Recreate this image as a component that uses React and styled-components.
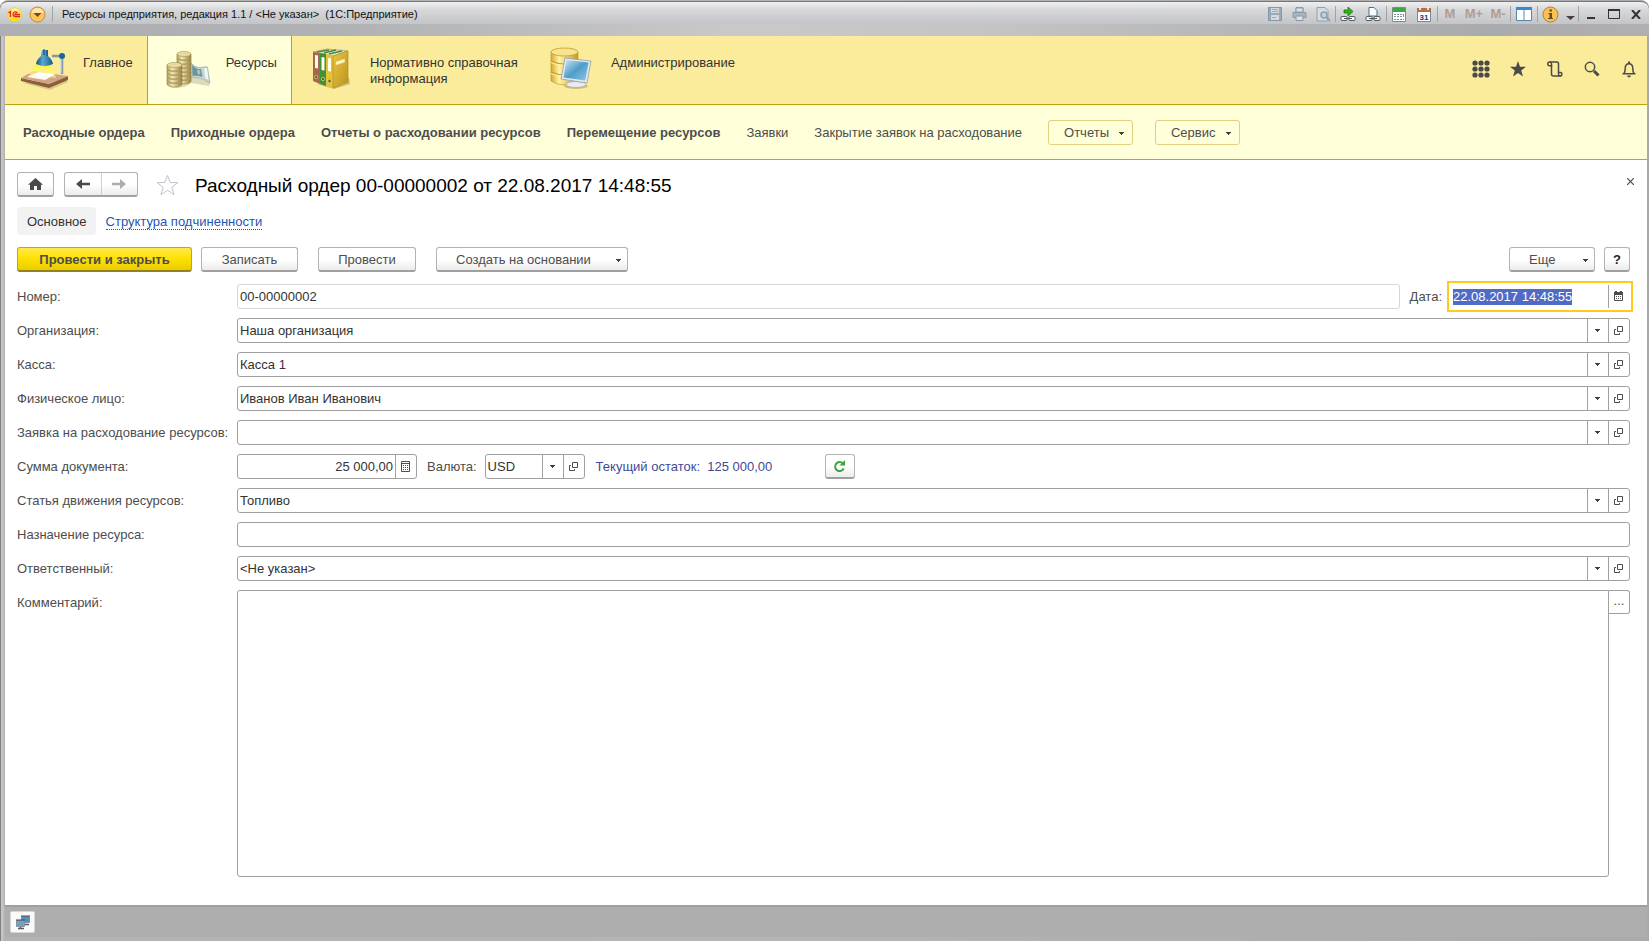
import React, { useEffect, useRef } from "react";
import styled, { createGlobalStyle, css } from "styled-components";

const GlobalStyle = createGlobalStyle`
  *, *::before, *::after { box-sizing: border-box; }
  body {
    margin: 0;
    background: #ffffff;
    color: #4d4d4d;
    font: 13px/16px "Liberation Sans", Arial, sans-serif;
  }
  button, input, textarea { font: inherit; color: inherit; }
  h1 { margin: 0; }
  svg { display: block; flex: none; }
`;

/* ---------- window frame ---------- */

const Window = styled.div`
  display: flex;
  flex-direction: column;
  min-height: 100vh;
  padding: 1px 2px 4px 5px;
  border-radius: 8px 8px 0 0;
  background: linear-gradient(90deg, #808080 0, #808080 1px, #c6c4c4 1px, #c6c4c4 3px, #b4b2b2 4px, #b4b4b6 50%, #a9aaad 100%);
`;

const TitleBar = styled.header`
  display: flex;
  align-items: center;
  height: 35px;
  margin: 0 -2px 0 -5px;
  padding: 0 2px 10px 7px;
  border-top: 1px solid #777777;
  border-radius: 8px 8px 0 0;
  background:
    linear-gradient(180deg, #f0f0f0 0, #d6d7d9 8px, #c4c5c8 22px, transparent 22px),
    linear-gradient(90deg, #aeafb2 0, #b0b1b4 20%, #c9c9c9 45%, #c4c4c4 60%, #a9aaad 90%, #b0b0b2 100%);
  color: #111111;
`;

const AppTitle = styled.div`
  flex: 1;
  margin-left: 9px;
  font-size: 11px;
  white-space: pre;
`;

const Separator = styled.span`
  width: 1px;
  height: 16px;
  background: #a3a3a6;
`;

const TitleButton = styled.button`
  display: grid;
  place-items: center;
  width: ${(p) => p.$w || 24}px;
  height: 20px;
  padding: 0;
  border: 0;
  background: none;
  color: #b09c94;
  font-weight: bold;
`;

/* ---------- sections ---------- */

const Sections = styled.nav`
  display: flex;
  min-height: 69px;
  border-bottom: 1px solid #bfa20e;
  background: #fbec9c;
`;

const SectionTab = styled.a`
  display: flex;
  gap: 15px;
  padding: 10px 14px 10px 15px;
  border-right: 1px solid ${(p) => (p.$line ? "#bfa20e" : "transparent")};
  background: ${(p) => (p.$active ? "#ffffd9" : "transparent")};
  color: #333333;
  text-decoration: none;
`;

const SectionName = styled.span`
  max-width: 148px;
  padding-top: 9px;
`;

const Tools = styled.div`
  display: flex;
  align-items: center;
  gap: 13px;
  margin-left: auto;
  padding: 0 6px 2px 0;
`;

const ToolButton = styled.button`
  display: grid;
  place-items: center;
  width: 24px;
  height: 24px;
  padding: 0;
  border: 0;
  background: none;
  color: #4a4a4a;
`;

/* ---------- commands of the section ---------- */

const Commands = styled.nav`
  display: flex;
  align-items: center;
  gap: 26px;
  min-height: 55px;
  padding: 0 18px;
  border-bottom: 1px solid #a0a08c;
  background: #ffffd9;
`;

const CommandLink = styled.a`
  padding-top: 2px;
  color: #4d4d4d;
  font-weight: ${(p) => (p.$strong ? "bold" : "normal")};
  text-decoration: none;
  white-space: nowrap;
`;

const CommandMenus = styled.div`
  display: flex;
  gap: 22px;
`;

const CommandMenu = styled.button`
  display: flex;
  align-items: center;
  gap: 10px;
  height: 25px;
  padding: 2px 8px 0 15px;
  border: 1px solid #e3cf7f;
  border-radius: 3px;
  background: transparent;
`;

/* ---------- document form ---------- */

const Document = styled.main`
  display: flex;
  flex: 1;
  flex-direction: column;
  padding: 12px 17px 28px 12px;
  background: #ffffff;
`;

const Heading = styled.div`
  display: flex;
  align-items: center;
  height: 25px;
`;

const Title = styled.h1`
  flex: 1;
  margin-left: 16px;
  padding-top: 2px;
  color: #000000;
  font-size: 19px;
  font-weight: normal;
  line-height: 24px;
`;

const raised = css`
  border: 1px solid #b3b3b3;
  border-bottom: 2px solid #a0a0a0;
  border-radius: 3px;
  background: linear-gradient(180deg, #ffffff 50%, #ececec);
`;

const Button = styled.button`
  ${raised}
  display: flex;
  align-items: center;
  justify-content: ${(p) => (p.$menu ? "space-between" : "center")};
  min-width: ${(p) => p.$w}px;
  height: 25px;
  padding: ${(p) => (p.$icon ? "0" : p.$menu ? "2px 6px 0 19px" : "2px 0 0")};
  color: ${(p) => (p.$dark ? "#222222" : "#4d4d4d")};
  font-weight: ${(p) => (p.$dark ? "bold" : "normal")};
  ${(p) =>
    p.$primary &&
    css`
      border-color: #c8a800 #c8a800 #94821e;
      background: linear-gradient(180deg, #ffe94a, #ffe000 50%, #eacb00);
      font-weight: bold;
    `}
`;

const History = styled.div`
  ${raised}
  display: flex;
  width: 74px;
  height: 25px;
  margin: 0 18px 0 10px;
`;

const HistoryButton = styled.button`
  display: grid;
  flex: 1;
  place-items: center;
  padding: 0;
  border: 0;
  background: none;
  color: ${(p) => (p.disabled ? "#adadad" : "#4a4a4a")};
  & + & { border-left: 1px solid #d0d0d0; }
`;

const IconButton = styled.button`
  display: grid;
  place-items: center;
  padding: 0;
  border: 0;
  background: none;
  color: #4d4d4d;
`;

const CloseButton = styled(IconButton)`
  align-self: flex-start;
  width: 18px;
  height: 18px;
  margin-right: -9px;
`;

const Pages = styled.nav`
  display: flex;
  align-items: center;
  gap: 10px;
  margin-top: 10px;
`;

const CurrentPage = styled.span`
  padding: 7px 9px 5px 10px;
  border-radius: 4px;
  background: #f2f2f2;
  color: #333333;
`;

const PageLink = styled.a`
  padding-top: 2px;
  border-bottom: 1px dotted #1f55b5;
  color: #1f55b5;
  line-height: 14px;
  text-decoration: none;
`;

const Actions = styled.div`
  display: flex;
  margin: 12px 0;
`;

const ActionGroup = styled.div`
  display: flex;
  gap: ${(p) => p.$gap}px;
  margin-left: ${(p) => (p.$end ? "auto" : "9px")};
`;

const Form = styled.form`
  display: flex;
  flex: 1;
  flex-direction: column;
  gap: 9px;
`;

const Row = styled.div`
  display: flex;
  flex: ${(p) => (p.$fill ? "1" : "none")};
  align-items: flex-start;
`;

const Label = styled.label`
  flex: none;
  width: ${(p) => (p.$inline ? "auto" : "220px")};
  height: 25px;
  margin: ${(p) => (p.$inline ? "0 8px 0 10px" : "0")};
  line-height: 26px;
`;

const Field = styled.div`
  display: flex;
  flex: ${(p) => (p.$w ? "none" : "1")};
  width: ${(p) => (p.$w ? `${p.$w}px` : "auto")};
  min-width: 0;
  height: 25px;
  border: 1px solid ${(p) => (p.$focus ? "transparent" : p.$readOnly ? "#d6d6d6" : "#a0a0a0")};
  border-radius: ${(p) => (p.$focus ? "0" : "3px")};
  outline: ${(p) => (p.$focus ? "2px solid #ffc91e" : "none")};
  outline-offset: 1px;
  background: #ffffff;
`;

const Input = styled.input`
  flex: 1;
  min-width: 0;
  padding: 0 2px;
  border: 0;
  outline: 0;
  background: transparent;
  color: #333333;
  text-align: ${(p) => (p.$right ? "right" : "left")};
  &::selection { background: #4f6bc5; color: #ffffff; }
`;

const FieldButton = styled.button`
  display: grid;
  flex: none;
  place-items: center;
  width: 21px;
  padding: 0 1px 0 0;
  border: 0;
  border-left: 1px solid #a0a0a0;
  background: none;
  color: #4d4d4d;
`;

const Balance = styled.output`
  width: 240px;
  padding-left: 11px;
  color: #3f4a94;
  height: 25px;
  line-height: 26px;
  white-space: pre;
`;

const Comment = styled.textarea`
  flex: 1;
  align-self: stretch;
  min-height: 100px;
  padding: 3px 2px;
  border: 1px solid #a0a0a0;
  border-radius: 3px 0 3px 3px;
  outline: 0;
  resize: none;
`;

const MoreButton = styled.button`
  width: 21px;
  height: 24px;
  padding: 0 0 2px;
  border: 1px solid #a0a0a0;
  border-left: 0;
  border-radius: 0 3px 3px 0;
  background: #ffffff;
`;

const StatusBar = styled.footer`
  display: flex;
  align-items: center;
  height: 32px;
  padding-left: 5px;
  border-top: 2px solid #9f9f9f;
  background: #aeaeae;
`;

const StatusButton = styled(IconButton)`
  width: 25px;
  height: 22px;
  border: 1px solid #d6d6d6;
  border-radius: 2px;
  background: #fafafa;
`;

/* ---------- icons ---------- */

const Arrow = () => (
  <svg width="5" height="3" viewBox="0 0 5 3" fill="#404040"><path d="M0 0h5v1H4v1H3v1H2V2H1V1H0z" /></svg>
);

const OpenIcon = () => (
  <svg width="9" height="9" viewBox="0 0 9 9" fill="none" stroke="#4d4d4d"><path d="M3.5.5h5v5h-5zM2 3.5H.5v5h5V7" /></svg>
);

const CalcIcon = () => (
  <svg width="9" height="11" viewBox="0 0 9 11">
    <path d="M.5.5h8v10h-8zM1 2.5h7" fill="none" stroke="#4d4d4d" />
    <path d="M2 4h1v1H2zM4 4h1v1H4zM6 4h1v1H6zM2 6h1v1H2zM4 6h1v1H4zM6 6h1v1H6zM2 8h1v1H2zM4 8h1v1H4zM6 8h1v1H6z" fill="#4d4d4d" />
  </svg>
);

const DateIcon = () => (
  <svg width="9" height="11" viewBox="0 0 9 11">
    <path d="M.5 2v7.500h8V2" fill="none" stroke="#4d4d4d" />
    <path d="M0 1h1V0h2v1h3V0h2v1h1v3H0zM2 5h1v1H2zM4 5h1v1H4zM6 5h1v1H6zM2 7h1v1H2zM4 7h1v1H4zM6 7h1v1H6z" fill="#4d4d4d" />
  </svg>
);

const RefreshIcon = () => (
  <svg width="13" height="13" viewBox="0 0 13 13">
    <path d="M9.800 3.400A4.500 4.500 0 1 0 10.700 8.500" fill="none" stroke="#3aa53c" strokeWidth="2" />
    <path d="M12 0v5.500H6.500z" fill="#3aa53c" />
  </svg>
);

const HomeIcon = () => (
  <svg width="15" height="12" viewBox="0 0 15 12" fill="#4a4a4a"><path d="M7.500 0 15 6.800h-2V12H9V8H6v4H2V6.800H0z" /></svg>
);

const BackIcon = ({ flip }) => (
  <svg width="14" height="10" viewBox="0 0 14 10">
    <path d={flip ? "M14 5 8 0v3.800H0v2.400h8V10z" : "M0 5l6-5v3.800h8v2.400H6V10z"} fill="currentColor" />
  </svg>
);

const FavoriteIcon = () => (
  <svg width="23" height="22" viewBox="0 0 23 22">
    <path d="M11.500 1.500 14.200 8.500 21.800 8.700 15.800 13.300 18 20.600 11.500 16.300 5 20.600 7.200 13.300 1.200 8.700 8.800 8.500z" fill="none" stroke="#bfc4c9" />
  </svg>
);

const CloseIcon = () => (
  <svg width="7" height="7" viewBox="0 0 7 7"><path d="M0 0l7 7M7 0 0 7" stroke="#4d4d4d" strokeWidth="1.200" /></svg>
);

const GridIcon = () => (
  <svg width="18" height="18" viewBox="0 0 18 18" fill="#4a4a4a">
    {[3, 9, 15].map((y) => [3, 9, 15].map((x) => <circle key={`${x}-${y}`} cx={x} cy={y} r="2.600" />))}
  </svg>
);

const StarIcon = () => (
  <svg width="16" height="16" viewBox="0 0 16 16" fill="#4a4a4a"><path d="M8 0l2 5.800h6l-4.800 3.700L13 15.500 8 12l-5 3.500 1.800-6L0 5.800h6z" /></svg>
);

const ScrollIcon = () => (
  <svg width="16" height="16" viewBox="0 0 16 16" fill="none" stroke="#4a4a4a" strokeWidth="1.500">
    <path d="M2.800 1H10q1.500 0 1.500 2v8.500M4.500 4.800V13q0 2 2 2h7" />
    <path d="M4.500 4.800H2.500A1.900 1.900 0 1 1 4.500 2.800z" />
    <path d="M11.500 11.500h2a1.700 1.700 0 1 1-2 1.700z" />
  </svg>
);

const SearchIcon = () => (
  <svg width="16" height="16" viewBox="0 0 16 16" fill="none" stroke="#4a4a4a">
    <circle cx="6" cy="6" r="4.700" strokeWidth="1.500" /><path d="M10 10l4.500 4.500" strokeWidth="3" />
  </svg>
);

const BellIcon = () => (
  <svg width="16" height="17" viewBox="0 0 16 17">
    <path d="M1.500 12.700h13M3 12.500q1.200-1.500 1.200-5Q4.200 2.700 8 2.700t3.800 4.800q0 3.500 1.200 5" fill="none" stroke="#4a4a4a" strokeWidth="1.500" />
    <path d="M7 .5h2v2H7zM6 14.500h4q-.5 2-2 2t-2-2z" fill="#4a4a4a" />
  </svg>
);

const LampIcon = () => (
  <svg width="48" height="48" viewBox="0 0 48 48">
    <defs>
      <linearGradient id="shade"><stop stopColor="#154e79" /><stop offset=".4" stopColor="#58a9d4" /><stop offset="1" stopColor="#155a88" /></linearGradient>
      <linearGradient id="light" x2="0" y2="1"><stop stopColor="#fff12e" /><stop offset="1" stopColor="#fff9a8" stopOpacity=".8" /></linearGradient>
    </defs>
    <path d="M3 37 30 44 48 36 44 32z" fill="#a59457" opacity=".4" />
    <path d="M1 32v3l28 7 19-8v-4L29 38z" fill="#8e5d40" />
    <path d="M1 32 13 25l35 5-19 8z" fill="#cfa583" />
    <path d="M7 31 14 27l20 2-9 5z" fill="#fff7e8" />
    <path d="M16 18 8 28l28 4-4-13z" fill="url(#light)" opacity=".75" />
    <path d="M14 29 18 26l16 2-8 5z" fill="#ffffff" />
    <path d="M32 10h10v18" fill="none" stroke="#8599a8" strokeWidth="2.500" />
    <path d="M41 10v17" stroke="#dce6ec" />
    <circle cx="42" cy="10" r="3" fill="#19699b" />
    <path d="M22 4h6v6q4 3 5 8-8 4-17 0 1-5 5-8z" fill="url(#shade)" />
    <path d="M24 3v6M27 4v6" stroke="#0f436a" />
  </svg>
);

const CoinStack = ({ x, y, w, n }) => (
  <g>
    {Array.from({ length: n }, (_, i) => y + (n - 1 - i) * 4).map((cy) => (
      <g key={cy}>
        <path d={`M${x} ${cy}v3a${w / 2} 3 0 0 0 ${w} 0v-3z`} fill="url(#coin)" stroke="#8c7a3c" strokeWidth=".6" />
        <ellipse cx={x + w / 2} cy={cy} rx={w / 2} ry="2.600" fill="#ead99e" stroke="#a8924e" strokeWidth=".6" />
      </g>
    ))}
  </g>
);

const MoneyIcon = () => (
  <svg width="48" height="48" viewBox="0 0 48 48">
    <defs><linearGradient id="coin"><stop stopColor="#b6a15c" /><stop offset=".35" stopColor="#f4e8b8" /><stop offset="1" stopColor="#94803f" /></linearGradient></defs>
    <path d="M6 41q14 3 22-4l18 3 1-4-18-6z" fill="#999878" opacity=".35" />
    <path d="M27 16q5 6 11 5.500 4-1 6.500-.5 1 8 2.500 16-6-4-11-5-4-1-9-.5z" fill="#c3d6d3" stroke="#91a9a7" strokeWidth=".7" />
    <path d="M29 19q5 5 9 4l1.500 8q-5-2-10-1z" fill="#6d9797" />
    <path d="M34 24q2-1 3 1t-1 4q-2-1-2-5z" fill="#a9c6c2" />
    <path d="M41 22.500l3-.5 1.500 12-3-2z" fill="#f2f7f4" />
    <CoinStack x={14} y={8} w={14} n={7} />
    <CoinStack x={4} y={19} w={15} n={5} />
  </svg>
);

const FoldersIcon = () => (
  <svg width="48" height="48" viewBox="0 0 48 48">
    <defs><linearGradient id="folder" x2="1" y2="1"><stop stopColor="#e8c740" /><stop offset="1" stopColor="#bd921f" /></linearGradient></defs>
    <path d="M10 38 27 43 43 38 42 32z" fill="#8a762c" opacity=".4" />
    <path d="M6 6 20 3l21 2-15 5z" fill="#e9e7cf" stroke="#8b8450" strokeWidth=".6" />
    <path d="M10 6 22 4M17 7 29 4M22 8 35 5" stroke="#4f8840" strokeWidth="1.500" />
    <path d="M6 6l7 1v31l-7-3z" fill="#a7674d" />
    <path d="M13 7l6 1v32l-6-2z" fill="#3f9335" />
    <path d="M19 8l7 2v32l-7-2z" fill="#e5c431" />
    <path d="M26 10 41 5v31l-15 6z" fill="url(#folder)" stroke="#a98724" strokeWidth=".6" />
    <path d="M8 9l3 .6v13L8 22zM14.500 11l3 .6v13l-3-.6zM21 12l3 .6v13l-3-.6z" fill="#fffdf1" />
    <path d="M28.500 15.500 38 12.500v4l-9.500 3z" fill="#fff4bb" stroke="#c6a43a" strokeWidth=".5" />
    <g fill="#6b5b25" stroke="#ddd5a3" strokeWidth=".7"><circle cx="9.300" cy="31" r="1.700" /><circle cx="16" cy="33" r="1.700" /><circle cx="22.500" cy="35" r="1.700" /></g>
  </svg>
);

const DatabaseIcon = () => (
  <svg width="48" height="48" viewBox="0 0 48 48">
    <defs>
      <linearGradient id="drum"><stop stopColor="#d9ab26" /><stop offset=".3" stopColor="#fff3a7" /><stop offset="1" stopColor="#c79a20" /></linearGradient>
      <linearGradient id="screen" x2="1" y2="1"><stop stopColor="#cde9f5" /><stop offset=".5" stopColor="#4f9dc9" /><stop offset="1" stopColor="#8cc7e3" /></linearGradient>
    </defs>
    <path d="M3 6v29q13 8 27 0V6z" fill="url(#drum)" stroke="#b98f28" strokeWidth=".6" />
    <path d="M3 15q13 6 27 0M3 26q13 6 27 0" fill="none" stroke="#c79526" strokeWidth="1.200" />
    <path d="M3 16.500q13 6 27 0M3 27.500q13 6 27 0" fill="none" stroke="#fff4b9" />
    <ellipse cx="16.500" cy="6" rx="13.500" ry="4" fill="#f8e48c" stroke="#c19a30" strokeWidth=".8" />
    <ellipse cx="28" cy="40" rx="12" ry="3" fill="#8e7c3b" opacity=".4" />
    <path d="M24 34h8v4h-8z" fill="#b7bec3" />
    <ellipse cx="28" cy="38.500" rx="10" ry="3" fill="#e9ecee" stroke="#a0a7ac" strokeWidth=".7" />
    <path d="M17 12l26 3-4 22-26-4z" fill="#e3e8eb" stroke="#96a0a7" strokeWidth=".8" />
    <path d="M18.500 14l22 2.500-3.300 18-21.700-3z" fill="url(#screen)" />
  </svg>
);

const LogoIcon = () => (
  <svg width="15" height="15" viewBox="0 0 15 15">
    <defs><radialGradient id="logo" cy=".3"><stop stopColor="#fffbb8" /><stop offset="1" stopColor="#ffe11c" /></radialGradient></defs>
    <circle cx="7.500" cy="7.500" r="7" fill="url(#logo)" stroke="#d9cc70" strokeWidth=".6" />
    <path d="M1.500 6 3.500 4.500V10M10.500 6Q9.500 4.500 7.500 5 6 5.500 6 7.300T8 9.500h5M9.500 7Q8 6.300 8 7.500h5" fill="none" stroke="#e02424" strokeWidth="1.300" />
  </svg>
);

const MainMenuIcon = () => (
  <svg width="17" height="17" viewBox="0 0 17 17">
    <circle cx="8.500" cy="8.500" r="7.500" fill="#ffc45c" stroke="#c38a32" />
    <path d="M2.500 7a6 5 0 0 1 12 0z" fill="#ffe3ab" /><path d="M4.500 7h8l-4 4z" fill="#6e4b20" />
  </svg>
);

const SaveIcon = () => (
  <svg width="14" height="14" viewBox="0 0 14 14"><path d="M.5.500h13v13H.5z" fill="#98abba" stroke="#8598a8" /><path d="M3 1h8v5H3zM3 8h8v5H3z" fill="#d3d9de" /><path d="M4 2.500h6M4 4.500h6M4 10.500h4" stroke="#9cabb7" /></svg>
);

const PrintIcon = () => (
  <svg width="15" height="14" viewBox="0 0 15 14"><path d="M4 5V.5h7V5M1 5.500h13v5H1z" fill="#a9b4be" stroke="#8c9aa6" /><path d="M4 1h7v4H4zM4 9h7v4.500H4z" fill="#dde1e4" stroke="#8c9aa6" /></svg>
);

const PreviewIcon = () => (
  <svg width="15" height="15" viewBox="0 0 15 15" fill="none" stroke="#8fa0ae"><path d="M1 .5h8l3 3V14H1z" fill="#d7dbdf" /><circle cx="8" cy="8" r="3" fill="#bfd2df" strokeWidth="1.500" /><path d="M10 10l4 4" strokeWidth="2" /></svg>
);

const LinkIcon = ({ page }) => (
  <svg width="16" height="15" viewBox="0 0 16 15">
    {page ? <path d="M4 9V.5h5l3 3V9z" fill="#f8fbff" stroke="#49708f" /> : <path d="M4 3h4V0l5 4.500L8 9V6H4z" fill="#35b01c" stroke="#16700e" strokeWidth=".7" />}
    <rect x="1" y="9.500" width="6" height="4" rx="1" fill="#f4f4f4" stroke="#555c63" />
    <rect x="9" y="9.500" width="6" height="4" rx="1" fill="#f4f4f4" stroke="#555c63" />
    <path d="M4 11.500h8" stroke="#555c63" />
  </svg>
);

const TableIcon = () => (
  <svg width="14" height="15" viewBox="0 0 14 15"><path d="M.5.500h13v14H.5z" fill="#fff" stroke="#799081" /><path d="M1 1h12v4H1z" fill="#3aa845" /><path d="M2 7.500h10M2 9.500h10M2 12.500h10" stroke="#81909a" strokeDasharray="2 1" /><path d="M11 7h1v3h-1z" fill="#db6a5a" /></svg>
);

const CalendarIcon = () => (
  <svg width="14" height="15" viewBox="0 0 14 15">
    <path d="M.5 1.500h13v13H.5z" fill="#fff" stroke="#72889b" /><path d="M0 1h14v4H0z" fill="#b3704c" /><path d="M3 0v3M11 0v3" stroke="#fff" strokeWidth="1.500" />
    <text x="7" y="12.500" textAnchor="middle" fontSize="8" fill="#223c57">31</text>
  </svg>
);

const PanelsIcon = () => (
  <svg width="16" height="14" viewBox="0 0 16 14"><path d="M.5.500h15v13H.5z" fill="#fff" stroke="#5a86aa" /><path d="M0 0h16v3H0z" fill="#2d8ddd" /><path d="M8 3v10" stroke="#6289a5" /></svg>
);

const InfoIcon = () => (
  <svg width="17" height="17" viewBox="0 0 17 17"><circle cx="8.500" cy="8.500" r="7.500" fill="#fbc052" stroke="#ad8034" /><path d="M7.500 3.500h2.500v2H7.500zM6.500 7H10v5h1v1H6v-1h1.500V8h-1z" fill="#5e4d35" /></svg>
);

const MoreMarkIcon = () => (
  <svg width="9" height="11" viewBox="0 0 9 11"><path d="M0 7h9L4.500 11z" fill="#4a4040" /></svg>
);

const MinimizeIcon = () => (
  <svg width="8" height="12" viewBox="0 0 8 12"><path d="M0 9h8v2H0z" fill="#333" /></svg>
);

const MaximizeIcon = () => (
  <svg width="12" height="10" viewBox="0 0 12 10"><path d="M.5.500h11v9H.5z" fill="none" stroke="#333" /><path d="M0 0h12v2H0z" fill="#333" /></svg>
);

const WindowCloseIcon = () => (
  <svg width="10" height="9" viewBox="0 0 10 9"><path d="M1 0l8 9M9 0 1 9" stroke="#333" strokeWidth="2" /></svg>
);

const MonitorsIcon = () => (
  <svg width="16" height="15" viewBox="0 0 16 15">
    <g stroke="#8a9096"><path d="M6.500 1.500h8v6h-8z" fill="#4c92c1" /><path d="M1.500 5.500h8v6h-8z" fill="#64a6cf" /></g>
    <path d="M6 1h9M1 5h9" stroke="#3b4d5b" /><path d="M10 9.500h4M3 13.500h6M5.500 12v2" stroke="#565d63" strokeWidth="1.500" />
  </svg>
);

/* ---------- screen ---------- */

const OPEN_SECTIONS = [
  { name: "Главное", icon: LampIcon, line: true },
  { name: "Ресурсы", icon: MoneyIcon, line: true, active: true },
  { name: "Нормативно справочная информация", icon: FoldersIcon },
  { name: "Администрирование", icon: DatabaseIcon },
];

const COMMANDS = [
  ["Расходные ордера", true],
  ["Приходные ордера", true],
  ["Отчеты о расходовании ресурсов", true],
  ["Перемещение ресурсов", true],
  ["Заявки", false],
  ["Закрытие заявок на расходование", false],
];

function PickButtons() {
  return (
    <>
      <FieldButton type="button" aria-label="Выбрать"><Arrow /></FieldButton>
      <FieldButton type="button" aria-label="Открыть"><OpenIcon /></FieldButton>
    </>
  );
}

function FieldRow({ id, label, value = "", plain }) {
  return (
    <Row>
      <Label htmlFor={id}>{label}</Label>
      <Field>
        <Input id={id} defaultValue={value} />
        {!plain && <PickButtons />}
      </Field>
    </Row>
  );
}

export default function App() {
  const dateInput = useRef(null);

  useEffect(() => {
    dateInput.current.focus();
    dateInput.current.select();
  }, []);

  return (
    <Window>
      <GlobalStyle />
      <TitleBar>
        <LogoIcon />
        <TitleButton $w={30} aria-label="Главное меню"><MainMenuIcon /></TitleButton>
        <Separator />
        <AppTitle>{"Ресурсы предприятия, редакция 1.1 / <Не указан>  (1С:Предприятие)"}</AppTitle>
        <TitleButton aria-label="Сохранить"><SaveIcon /></TitleButton>
        <TitleButton aria-label="Печать"><PrintIcon /></TitleButton>
        <TitleButton aria-label="Просмотр"><PreviewIcon /></TitleButton>
        <Separator />
        <TitleButton aria-label="Перейти по ссылке"><LinkIcon /></TitleButton>
        <TitleButton $w={26} aria-label="Получить ссылку"><LinkIcon page /></TitleButton>
        <Separator />
        <TitleButton aria-label="Калькулятор"><TableIcon /></TitleButton>
        <TitleButton $w={26} aria-label="Календарь"><CalendarIcon /></TitleButton>
        <Separator />
        <TitleButton disabled>M</TitleButton>
        <TitleButton disabled>M+</TitleButton>
        <TitleButton disabled>M-</TitleButton>
        <Separator />
        <TitleButton $w={26} aria-label="Окна"><PanelsIcon /></TitleButton>
        <Separator />
        <TitleButton aria-label="О программе"><InfoIcon /></TitleButton>
        <TitleButton $w={16} aria-label="Ещё"><MoreMarkIcon /></TitleButton>
        <Separator />
        <TitleButton aria-label="Свернуть"><MinimizeIcon /></TitleButton>
        <TitleButton $w={22} aria-label="Развернуть"><MaximizeIcon /></TitleButton>
        <TitleButton $w={22} aria-label="Закрыть программу"><WindowCloseIcon /></TitleButton>
      </TitleBar>

      <Sections>
        {OPEN_SECTIONS.map(({ name, icon: Icon, line, active }) => (
          <SectionTab key={name} href="#" $line={line} $active={active}>
            <Icon />
            <SectionName>{name}</SectionName>
          </SectionTab>
        ))}
        <Tools>
          <ToolButton aria-label="Функции"><GridIcon /></ToolButton>
          <ToolButton aria-label="Избранное"><StarIcon /></ToolButton>
          <ToolButton aria-label="История"><ScrollIcon /></ToolButton>
          <ToolButton aria-label="Поиск"><SearchIcon /></ToolButton>
          <ToolButton aria-label="Оповещения"><BellIcon /></ToolButton>
        </Tools>
      </Sections>

      <Commands>
        {COMMANDS.map(([name, strong]) => (
          <CommandLink key={name} href="#" $strong={strong}>{name}</CommandLink>
        ))}
        <CommandMenus>
          <CommandMenu>Отчеты<Arrow /></CommandMenu>
          <CommandMenu>Сервис<Arrow /></CommandMenu>
        </CommandMenus>
      </Commands>

      <Document>
        <Heading>
          <Button $w={37} $icon aria-label="Начальная страница"><HomeIcon /></Button>
          <History>
            <HistoryButton aria-label="Назад"><BackIcon /></HistoryButton>
            <HistoryButton aria-label="Вперед" disabled><BackIcon flip /></HistoryButton>
          </History>
          <IconButton aria-label="В избранное"><FavoriteIcon /></IconButton>
          <Title>Расходный ордер 00-00000002 от 22.08.2017 14:48:55</Title>
          <CloseButton aria-label="Закрыть"><CloseIcon /></CloseButton>
        </Heading>

        <Pages>
          <CurrentPage>Основное</CurrentPage>
          <PageLink href="#">Структура подчиненности</PageLink>
        </Pages>

        <Actions>
          <Button $w={175} $primary>Провести и закрыть</Button>
          <ActionGroup $gap={20}>
            <Button $w={97}>Записать</Button>
            <Button $w={98}>Провести</Button>
            <Button $w={192} $menu>Создать на основании<Arrow /></Button>
          </ActionGroup>
          <ActionGroup $gap={9} $end>
            <Button $w={86} $menu>Еще<Arrow /></Button>
            <Button $w={26} $dark>?</Button>
          </ActionGroup>
        </Actions>

        <Form>
          <Row>
            <Label htmlFor="number">Номер:</Label>
            <Field $readOnly><Input id="number" defaultValue="00-00000002" readOnly /></Field>
            <Label htmlFor="date" $inline>Дата:</Label>
            <Field $w={180} $focus>
              <Input id="date" ref={dateInput} defaultValue="22.08.2017 14:48:55" />
              <FieldButton type="button" aria-label="Выбрать дату"><DateIcon /></FieldButton>
            </Field>
          </Row>
          <FieldRow id="organization" label="Организация:" value="Наша организация" />
          <FieldRow id="cashbox" label="Касса:" value="Касса 1" />
          <FieldRow id="person" label="Физическое лицо:" value="Иванов Иван Иванович" />
          <FieldRow id="request" label="Заявка на расходование ресурсов:" />
          <Row>
            <Label htmlFor="amount">Сумма документа:</Label>
            <Field $w={180}>
              <Input id="amount" defaultValue="25 000,00" $right />
              <FieldButton type="button" aria-label="Калькулятор суммы"><CalcIcon /></FieldButton>
            </Field>
            <Label htmlFor="currency" $inline>Валюта:</Label>
            <Field $w={100}>
              <Input id="currency" defaultValue="USD" />
              <PickButtons />
            </Field>
            <Balance>{"Текущий остаток:  125 000,00"}</Balance>
            <Button type="button" $w={30} $icon aria-label="Обновить остаток"><RefreshIcon /></Button>
          </Row>
          <FieldRow id="article" label="Статья движения ресурсов:" value="Топливо" />
          <FieldRow id="purpose" label="Назначение ресурса:" plain />
          <FieldRow id="responsible" label="Ответственный:" value="<Не указан>" />
          <Row $fill>
            <Label htmlFor="comment">Комментарий:</Label>
            <Comment id="comment" />
            <MoreButton type="button" aria-label="Редактировать комментарий">...</MoreButton>
          </Row>
        </Form>
      </Document>

      <StatusBar>
        <StatusButton aria-label="Соединение"><MonitorsIcon /></StatusButton>
      </StatusBar>
    </Window>
  );
}
